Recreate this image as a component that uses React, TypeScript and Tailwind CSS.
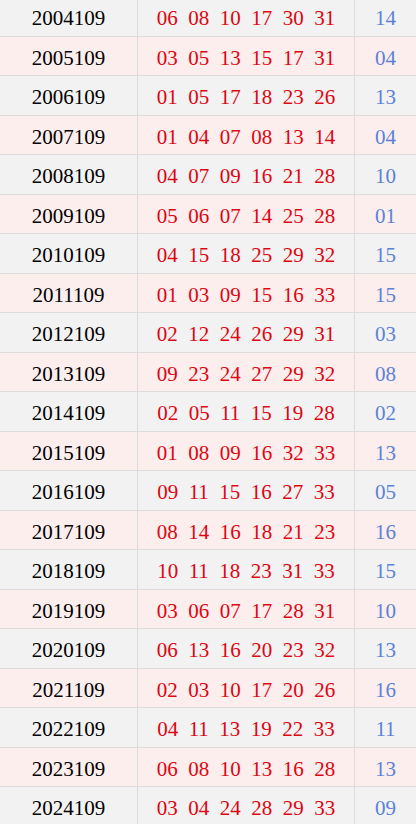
import React from "react";

const rows: [string, string[], string][] = [
  ["2004109", ["06", "08", "10", "17", "30", "31"], "14"],
  ["2005109", ["03", "05", "13", "15", "17", "31"], "04"],
  ["2006109", ["01", "05", "17", "18", "23", "26"], "13"],
  ["2007109", ["01", "04", "07", "08", "13", "14"], "04"],
  ["2008109", ["04", "07", "09", "16", "21", "28"], "10"],
  ["2009109", ["05", "06", "07", "14", "25", "28"], "01"],
  ["2010109", ["04", "15", "18", "25", "29", "32"], "15"],
  ["2011109", ["01", "03", "09", "15", "16", "33"], "15"],
  ["2012109", ["02", "12", "24", "26", "29", "31"], "03"],
  ["2013109", ["09", "23", "24", "27", "29", "32"], "08"],
  ["2014109", ["02", "05", "11", "15", "19", "28"], "02"],
  ["2015109", ["01", "08", "09", "16", "32", "33"], "13"],
  ["2016109", ["09", "11", "15", "16", "27", "33"], "05"],
  ["2017109", ["08", "14", "16", "18", "21", "23"], "16"],
  ["2018109", ["10", "11", "18", "23", "31", "33"], "15"],
  ["2019109", ["03", "06", "07", "17", "28", "31"], "10"],
  ["2020109", ["06", "13", "16", "20", "23", "32"], "13"],
  ["2021109", ["02", "03", "10", "17", "20", "26"], "16"],
  ["2022109", ["04", "11", "13", "19", "22", "33"], "11"],
  ["2023109", ["06", "08", "10", "13", "16", "28"], "13"],
  ["2024109", ["03", "04", "24", "28", "29", "33"], "09"],
];

export default function App() {
  return (
    <div
      className="w-[416px] h-[824px] overflow-hidden bg-white"
      style={{ fontFamily: '"Liberation Serif", "Noto Sans CJK SC", serif' }}
    >
      <div className="-mt-[3px]">
        {rows.map(([date, nums, blue], i) => (
          <div
            key={date}
            className={`grid grid-cols-[138px_217px_1fr] h-[39.5px] border-b border-[#dcdcdc] ${
              i % 2 === 0 ? "bg-[#f2f2f2]" : "bg-[#fdeeee]"
            }`}
          >
            <div className="flex items-center justify-center border-r border-[#dcdcdc] text-[21px] text-black pt-[5px]">
              {date}
            </div>
            <div className="flex items-center justify-center gap-[10.5px] border-r border-[#dcdcdc] text-[21px] text-[#dd0612] pt-[5px]">
              {nums.map((n, j) => (
                <span key={j}>{n}</span>
              ))}
            </div>
            <div className="flex items-center justify-center text-[21px] text-[#5b82d6] pt-[5px]">
              {blue}
            </div>
          </div>
        ))}
      </div>
    </div>
  );
}
